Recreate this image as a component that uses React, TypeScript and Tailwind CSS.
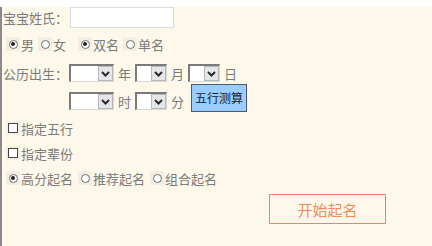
import React from 'react';

const font = { fontFamily: '"Noto Sans CJK SC", "Noto Sans", sans-serif' };

function Radio({ checked, label }: { checked?: boolean; label: string }) {
  return (
    <label className="flex items-center">
      <span className="flex h-[14px] w-[14px] items-center justify-center bg-[#f3eee2]">
        <span className="flex h-[9px] w-[9px] items-center justify-center rounded-full border border-[#6d6d6d] bg-white">
          {checked && <span className="h-[4px] w-[4px] rounded-full bg-[#222]" />}
        </span>
      </span>
      <span className="ml-[1px]">{label}</span>
    </label>
  );
}

function Check({ label }: { label: string }) {
  return (
    <label className="flex items-center">
      <span className="flex h-[14px] w-[14px] items-center justify-center bg-[#f3eee2]">
        <span className="h-[10px] w-[10px] border border-[#444] bg-white" />
      </span>
      <span className="ml-[1px]">{label}</span>
    </label>
  );
}

function Select({ w }: { w: string }) {
  return (
    <div className={`flex h-[18px] ${w} border-t-2 border-l-2 border-[#7a7a7a] border-r border-b border-r-[#d8d8d8] border-b-[#d8d8d8] bg-white`}>
      <div className="flex-1" />
      <div className="flex w-[15px] items-center justify-center border border-[#b8b8b8] bg-[#e4e6ea]">
        <svg width="9" height="6" viewBox="0 0 9 6">
          <path d="M1 1 L4.5 4.5 L8 1" stroke="#2a2a2a" strokeWidth="2" fill="none" />
        </svg>
      </div>
    </div>
  );
}

export default function App() {
  return (
    <div className="h-[246px] w-[432px] border-l-2 border-[#8a8a8a] bg-[#fdf8ea] text-[13px] leading-none text-[#7b7b7b]" style={font}>
      <div className="flex h-[21px] items-center pl-[1px] mt-[7px]">
        <span>宝宝姓氏：</span>
        <div className="ml-[2px] h-[21px] w-[104px] border border-[#dcdcdc] bg-white" />
      </div>

      <div className="mt-[9px] flex h-[14px] items-center pl-[4px]">
        <Radio checked label="男" />
        <span className="ml-[4px]"><Radio label="女" /></span>
        <span className="ml-[12px]"><Radio checked label="双名" /></span>
        <span className="ml-[4px]"><Radio label="单名" /></span>
      </div>

      <div className="mt-[13px] flex h-[18px] items-center pl-[1px]">
        <span>公历出生：</span>
        <span className="ml-[1px]"><Select w="w-[45px]" /></span>
        <span className="mx-[4px]">年</span>
        <Select w="w-[32px]" />
        <span className="mx-[4px]">月</span>
        <Select w="w-[32px]" />
        <span className="ml-[4px]">日</span>
      </div>

      <div className="mt-[4px] flex h-[30px] items-center pl-[67px]">
        <Select w="w-[45px]" />
        <span className="mx-[4px]">时</span>
        <Select w="w-[32px]" />
        <span className="ml-[4px]">分</span>
        <button className="ml-[7px] mb-[6px] h-[28px] w-[56px] border border-[#4f5b6a] bg-[#99ccff] text-[12px] text-[#1c1c1c]">
          五行测算
        </button>
      </div>

      <div className="mt-[5px] flex h-[14px] items-center pl-[4px]">
        <Check label="指定五行" />
      </div>
      <div className="mt-[11px] flex h-[14px] items-center pl-[4px]">
        <Check label="指定辈份" />
      </div>

      <div className="mt-[11px] flex h-[14px] items-center pl-[4px]">
        <Radio checked label="高分起名" />
        <span className="ml-[5px]"><Radio label="推荐起名" /></span>
        <span className="ml-[5px]"><Radio label="组合起名" /></span>
      </div>

      <div className="mt-[9px] flex pl-[267px]">
        <button className="h-[30px] w-[117px] border border-[#e2896a] bg-transparent text-[15px] text-[#ee8c60]">
          开始起名
        </button>
      </div>
    </div>
  );
}
